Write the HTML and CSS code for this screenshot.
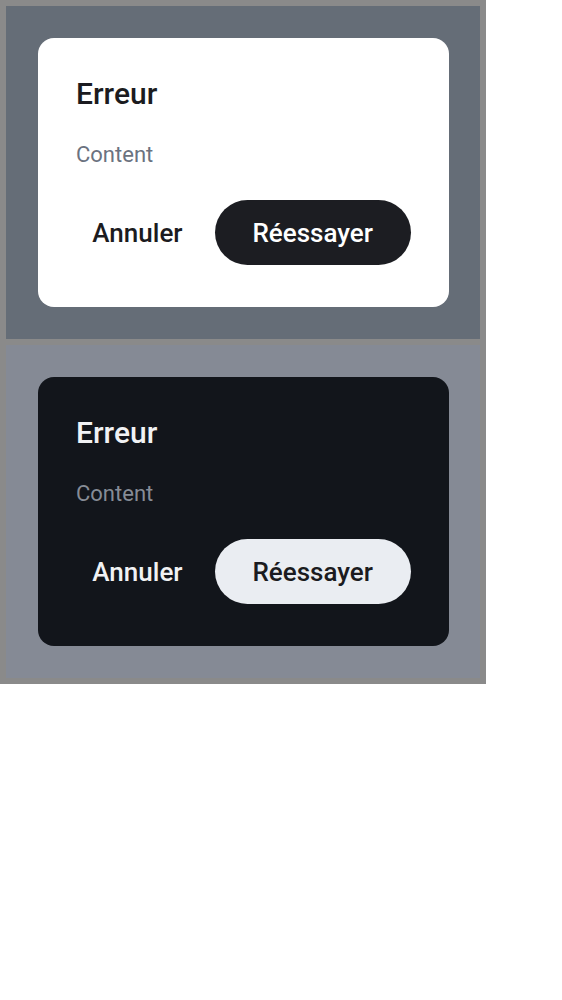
FILE: index.html
```html
<!DOCTYPE html>
<html lang="fr">
<head>
<meta charset="utf-8">
<link rel="stylesheet" href="styles.css">
</head>
<body>
<div class="frame">
  <section class="panel panel-light">
    <div class="dialog dialog-light">
      <h2 class="title">Erreur</h2>
      <p class="content">Content</p>
      <div class="actions">
        <button class="btn btn-text">Annuler</button>
        <button class="btn btn-filled">Réessayer</button>
      </div>
    </div>
  </section>
  <section class="panel panel-dark">
    <div class="dialog dialog-dark">
      <h2 class="title">Erreur</h2>
      <p class="content">Content</p>
      <div class="actions">
        <button class="btn btn-text">Annuler</button>
        <button class="btn btn-filled">Réessayer</button>
      </div>
    </div>
  </section>
</div>
</body>
</html>
```
FILE: styles.css
```css
* { box-sizing: border-box; }
body {
  margin: 0;
  background: #ffffff;
  font-family: Roboto, "Noto Sans", sans-serif;
}
.frame {
  width: 486px;
  background: #8a8a8a;
  padding: 6px;
  display: flex;
  flex-direction: column;
  gap: 6px;
}
.panel {
  height: 333px;
  padding: 32px 31px 32px 32px;
}
.panel-light { background: #656d77; }
.panel-dark { background: #858a95; }
.dialog {
  height: 269px;
  border-radius: 16px;
  padding: 38px 38px 0 38px;
  display: flex;
  flex-direction: column;
}
.dialog-light { background: #ffffff; }
.dialog-dark { background: #12151b; }
.title {
  margin: 0;
  font-size: 30px;
  line-height: 36px;
  font-weight: 500;
}
.content {
  margin: 29px 0 0 0;
  font-size: 22px;
  line-height: 28px;
  font-weight: 400;
}
.dialog-light .title { color: #1b1b20; }
.dialog-light .content { color: #6b7280; }
.dialog-dark .title { color: #f1f2f4; }
.dialog-dark .content { color: #868c96; }
.actions {
  margin-top: 31px;
  display: flex;
  justify-content: flex-end;
  gap: 8px;
}
.btn {
  border: none;
  font-family: inherit;
  font-size: 26px;
  font-weight: 500;
  height: 65px;
  border-radius: 999px;
  cursor: pointer;
}
.btn-text { background: transparent; padding: 0 24px; }
.btn-filled { padding: 0 38px; }
.dialog-light .btn-text { color: #1b1b20; }
.dialog-dark .btn-text { color: #f1f2f4; }
.dialog-light .btn-filled { background: #1c1d22; color: #ffffff; }
.dialog-dark .btn-filled { background: #eaedf2; color: #1b1b20; }
```
